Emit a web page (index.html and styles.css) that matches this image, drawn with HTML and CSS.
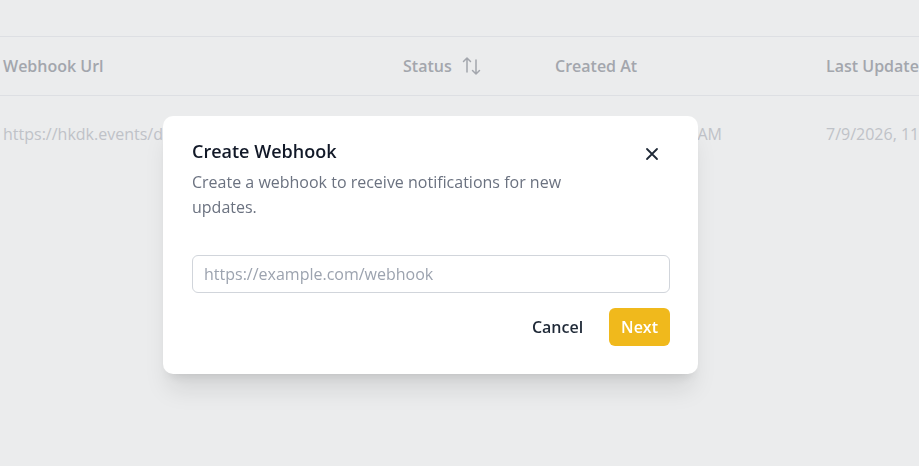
FILE: index.html
```html
<!DOCTYPE html>
<html>
<head>
    <title>Webhooks</title>
    <link rel="stylesheet" href="styles.css">
</head>
<body>
    <div class="table-wrap">
        <table class="hooks">
            <thead>
                <tr>
                    <th class="col-url">Webhook Url</th>
                    <th class="col-status">
                        <span class="sortable">Status
                            <svg class="sort-icon" width="22" height="22" viewBox="0 0 22 22" fill="none" stroke="currentColor" stroke-width="1.5" stroke-linecap="round" stroke-linejoin="round">
                                <path d="M6 17V3M2.5 6.5L6 3l3.5 3.5"/>
                                <path d="M15 5v14M11.5 15.5L15 19l3.5-3.5"/>
                            </svg>
                        </span>
                    </th>
                    <th class="col-created">Created At</th>
                    <th class="col-updated">Last Update</th>
                </tr>
            </thead>
            <tbody>
                <tr>
                    <td class="col-url">https://hkdk.events/dx7q2m0v9c1lpa</td>
                    <td class="col-status"></td>
                    <td class="col-created">7/9/2026, 11:42:18 AM</td>
                    <td class="col-updated">7/9/2026, 11:42:18 AM</td>
                </tr>
            </tbody>
        </table>
    </div>

    <div class="overlay">
        <div class="modal">
            <div class="modal-head">
                <div>
                    <h2 class="modal-title">Create Webhook</h2>
                    <p class="modal-desc">Create a webhook to receive notifications for new updates.</p>
                </div>
                <button type="button" class="close-button" aria-label="Close">
                    <svg width="16" height="16" viewBox="0 0 16 16" fill="none" stroke="currentColor" stroke-width="1.8" stroke-linecap="round">
                        <path d="M3 3l10 10M13 3L3 13"/>
                    </svg>
                </button>
            </div>
            <input type="text" class="url-input" placeholder="https://example.com/webhook">
            <div class="modal-actions">
                <button type="button" class="cancel-button">Cancel</button>
                <button type="button" class="next-button">Next</button>
            </div>
        </div>
    </div>
</body>
</html>
```

FILE: styles.css
```css
body {
    margin: 0;
    background: #fff;
    font-family: "Open Sans", "Noto Sans", sans-serif;
    overflow: hidden;
}
.table-wrap {
    padding-top: 36px;
    margin-left: -21px;
}
.hooks {
    border-collapse: collapse;
    table-layout: fixed;
    width: 1100px;
    text-align: left;
}
.hooks th,
.hooks td {
    padding: 0 24px;
    white-space: nowrap;
    overflow: hidden;
    border-top: 1px solid #f0f1f4;
}
.hooks th {
    height: 58px;
    font-size: 16px;
    font-weight: 600;
    color: #afb2b8;
}
.hooks td {
    height: 78px;
    font-size: 16px;
    color: #cfd1d6;
    vertical-align: top;
    padding-top: 27px;
    box-sizing: border-box;
}
.col-url {
    width: 352px;
}
.col-status {
    width: 104px;
}
.col-created {
    width: 223px;
}
.col-updated {
    width: 250px;
}
.sortable {
    display: inline-flex;
    align-items: center;
    gap: 9px;
}
.sort-icon {
    color: #afb2b8;
}

/* dimmed backdrop behind the dialog */
.overlay {
    position: fixed;
    inset: 0;
    background: rgba(55, 65, 81, 0.1);
    display: flex;
    align-items: flex-start;
    padding: 116px 0 0 163px;
}
.modal {
    width: 535px;
    box-sizing: border-box;
    background: #fff;
    border-radius: 10px;
    padding: 22px 28px 28px 29px;
    box-shadow: 0 20px 25px -5px rgba(0, 0, 0, 0.1), 0 8px 10px -6px rgba(0, 0, 0, 0.1);
}
.modal-head {
    display: flex;
    justify-content: space-between;
    align-items: flex-start;
}
.modal-title {
    margin: 0;
    font-size: 18px;
    font-weight: 600;
    line-height: 26px;
    color: #111827;
}
.modal-desc {
    margin: 6px 0 0;
    max-width: 400px;
    font-size: 16px;
    line-height: 25px;
    color: #6b7280;
}
.close-button {
    background: none;
    border: none;
    padding: 0;
    margin: 8px 10px 0 0;
    color: #1f2937;
    cursor: pointer;
    display: flex;
}
.url-input {
    display: block;
    width: 100%;
    box-sizing: border-box;
    margin-top: 35px;
    height: 38px;
    padding: 0 11px;
    border: 1px solid #d1d5db;
    border-radius: 6px;
    font-family: inherit;
    font-size: 16px;
    color: #111827;
}
.url-input::placeholder {
    color: #9ca3af;
}
.modal-actions {
    display: flex;
    justify-content: flex-end;
    align-items: center;
    gap: 26px;
    margin-top: 15px;
}
.cancel-button,
.next-button {
    font-family: inherit;
    font-size: 16px;
    font-weight: 600;
    border: none;
    cursor: pointer;
}
.cancel-button {
    background: none;
    color: #1f2937;
    padding: 0;
}
.next-button {
    height: 38px;
    padding: 0 12px;
    border-radius: 6px;
    background: #f0b91c;
    color: #fff;
}
```
